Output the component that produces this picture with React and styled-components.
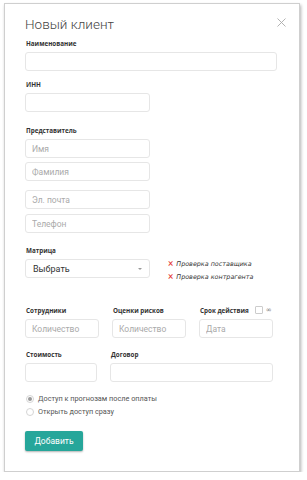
import React from 'react';
import styled, { createGlobalStyle } from 'styled-components';

const GlobalStyle = createGlobalStyle`
  body {
    margin: 0;
    background: #fff;
    font-family: Roboto, "Liberation Sans", sans-serif;
  }
`;

const Card = styled.form`
  box-sizing: border-box;
  width: 296px;
  margin: 3px 0 0 4px;
  padding: 12px 21px 20px 20px;
  background: #fff;
  border: 1px solid #cfcfcf;
  box-shadow: 1px 2px 3px rgba(0, 0, 0, 0.3);
`;

const Header = styled.div`
  display: flex;
  justify-content: space-between;
  align-items: center;
  height: 16px;
`;

const Title = styled.h1`
  margin: 0;
  font-size: 13.5px;
  line-height: 16px;
  font-weight: 300;
  color: #444;
`;

const Close = styled.button`
  display: flex;
  padding: 0;
  margin: 0 -8px 3px 0;
  border: none;
  background: none;
`;

const Field = styled.div`
  margin-top: ${({ $top = 0 }) => $top}px;
  display: flex;
  flex-direction: column;
  align-items: flex-start;
`;

const Label = styled.label`
  display: flex;
  align-items: center;
  gap: 5px;
  height: 8px;
  margin: 0 0 5px 1px;
  font-family: "Open Sans", sans-serif;
  font-size: 6.3px;
  font-weight: 700;
  color: #333;
  white-space: nowrap;
`;

const Input = styled.input`
  box-sizing: border-box;
  width: ${({ $w }) => $w}px;
  height: 19px;
  margin-top: ${({ $gap = 0 }) => $gap}px;
  padding: 0 6px;
  border: 1px solid #e6e6e6;
  border-radius: 3px;
  font-family: inherit;
  font-size: 8.5px;
  color: #333;
  outline: none;

  &::placeholder {
    color: #aaa;
  }
`;

const MatrixRow = styled.div`
  display: flex;
  align-items: flex-start;
  gap: 18px;
`;

const Select = styled.div`
  box-sizing: border-box;
  display: flex;
  align-items: center;
  justify-content: space-between;
  width: 125px;
  height: 19px;
  padding: 0 7px;
  border: 1px solid #e6e6e6;
  border-radius: 3px;
  font-size: 9px;
  color: #333;
`;

const Arrow = styled.span`
  width: 0;
  height: 0;
  border-left: 2px solid transparent;
  border-right: 2px solid transparent;
  border-top: 2.5px solid #999;
`;

const Checks = styled.ul`
  margin: 0;
  padding: 0;
  list-style: none;
  display: flex;
  flex-direction: column;
  gap: 4px;
`;

const Check = styled.li`
  display: flex;
  align-items: center;
  gap: 3px;
  height: 9px;
  font-family: "DejaVu Sans", sans-serif;
  font-size: 6.4px;
  font-style: italic;
  color: #333;
`;

const Cross = styled.span`
  font-family: Roboto, sans-serif;
  color: #e53935;
  font-size: 10px;
  font-style: normal;
  line-height: 8px;
`;

const Grid = styled.div`
  display: grid;
  grid-template-columns: ${({ $cols }) => $cols};
  column-gap: 13px;
  margin-top: ${({ $top }) => $top}px;
`;

const Box = styled.span`
  box-sizing: border-box;
  width: 8px;
  height: 8px;
  margin-left: 1px;
  border: 1px solid #ccc;
  border-radius: 1px;
`;

const Infinity = styled.span`
  margin-left: -2px;
  font-family: "DejaVu Sans", sans-serif;
  font-size: 7px;
  font-weight: 400;
  color: #777;
`;

const Radios = styled.div`
  display: flex;
  flex-direction: column;
  gap: 4px;
  margin-top: 12px;
  margin-left: 1px;
`;

const Radio = styled.label`
  display: flex;
  align-items: center;
  gap: 4px;
  height: 9px;
  font-size: 7.3px;
  color: #555;
`;

const Dot = styled.span`
  box-sizing: border-box;
  display: flex;
  align-items: center;
  justify-content: center;
  width: 8px;
  height: 8px;
  border: 1px solid #d5d5d5;
  border-radius: 50%;

  &::after {
    content: '';
    width: 4px;
    height: 4px;
    border-radius: 50%;
    background: ${({ $on }) => ($on ? '#999' : 'transparent')};
  }
`;

const Submit = styled.button`
  display: block;
  margin-top: 15px;
  width: 58px;
  height: 20px;
  padding: 0;
  border: none;
  border-radius: 2px;
  background: #26a69a;
  box-shadow: 0 1px 2px rgba(0, 0, 0, 0.3);
  color: #fff;
  font-family: inherit;
  font-size: 8.5px;
`;

const App = () => (
  <>
    <GlobalStyle />
    <Card>
      <Header>
        <Title>Новый клиент</Title>
        <Close type="button">
          <svg width="9" height="9" viewBox="0 0 9 9">
            <path d="M0.5 0.5L8.5 8.5M8.5 0.5L0.5 8.5" stroke="#aaa" strokeWidth="0.9" />
          </svg>
        </Close>
      </Header>

      <Field $top={7}>
        <Label>Наименование</Label>
        <Input $w={252} />
      </Field>

      <Field $top={9}>
        <Label>ИНН</Label>
        <Input $w={125} />
      </Field>

      <Field $top={14}>
        <Label>Представитель</Label>
        <Input $w={125} placeholder="Имя" />
        <Input $w={125} $gap={4} placeholder="Фамилия" />
        <Input $w={125} $gap={9} placeholder="Эл. почта" />
        <Input $w={125} $gap={5} placeholder="Телефон" />
      </Field>

      <Field $top={13}>
        <Label>Матрица</Label>
        <MatrixRow>
          <Select>
            Выбрать
            <Arrow />
          </Select>
          <Checks>
            <Check>
              <Cross>×</Cross>Проверка поставщика
            </Check>
            <Check>
              <Cross>×</Cross>Проверка контрагента
            </Check>
          </Checks>
        </MatrixRow>
      </Field>

      <Grid $cols="74px 74px 74px" $top={25}>
        <Field>
          <Label>Сотрудники</Label>
          <Input $w={74} placeholder="Количество" />
        </Field>
        <Field>
          <Label>Оценки рисков</Label>
          <Input $w={74} placeholder="Количество" />
        </Field>
        <Field>
          <Label>
            Срок действия
            <Box />
            <Infinity>∞</Infinity>
          </Label>
          <Input $w={74} placeholder="Дата" />
        </Field>
      </Grid>

      <Grid $cols="72px 163px" $top={12}>
        <Field>
          <Label>Стоимость</Label>
          <Input $w={72} />
        </Field>
        <Field>
          <Label>Договор</Label>
          <Input $w={163} />
        </Field>
      </Grid>

      <Radios>
        <Radio>
          <Dot $on />
          Доступ к прогнозам после оплаты
        </Radio>
        <Radio>
          <Dot />
          Открыть доступ сразу
        </Radio>
      </Radios>

      <Submit type="button">Добавить</Submit>
    </Card>
  </>
);

export default App;
